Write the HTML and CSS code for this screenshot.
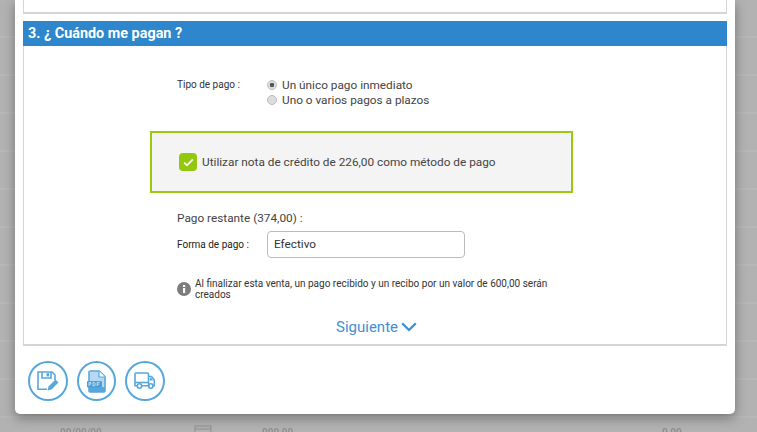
FILE: index.html
```html
<!DOCTYPE html>
<html lang="es">
<head>
<meta charset="utf-8">
<title>Cuándo me pagan</title>
<link rel="stylesheet" href="styles.css">
</head>
<body>
<div class="backdrop">
  <span class="ghost ghost-a">00/00/00</span>
  <svg class="ghost-icon" width="18" height="10" viewBox="0 0 18 10"><path d="M1 10V1h16v9M1 4h16" fill="none" stroke="#8f8f8f"/></svg>
  <span class="ghost ghost-b">000,00</span>
  <span class="ghost ghost-c">0,00</span>
</div>
<main class="modal">
  <div class="prev-panel"></div>
  <section class="panel">
    <h2 class="panel-title">3. ¿ Cuándo me pagan ?</h2>
    <div class="pay-type">
      <div class="small-label">Tipo de pago :</div>
      <div class="radios">
        <label class="radio-row"><span class="radio radio-on"></span>Un único pago inmediato</label>
        <label class="radio-row"><span class="radio"></span>Uno o varios pagos a plazos</label>
      </div>
    </div>
    <div class="credit-box">
      <span class="check">
        <svg width="11" height="9" viewBox="0 0 11 9"><path d="M1.2 4.6 4 7.4 9.8 1.4" fill="none" stroke="#fff" stroke-width="1.7"/></svg>
      </span>
      <span>Utilizar nota de crédito de 226,00 como método de pago</span>
    </div>
    <div class="remaining">
      <div class="remaining-title">Pago restante (374,00) :</div>
      <div class="method-row">
        <span class="small-label method-label">Forma de pago :</span>
        <div class="select-box">Efectivo</div>
      </div>
    </div>
    <div class="notice">
      <svg class="info" width="14" height="14" viewBox="0 0 14 14"><circle cx="7" cy="7" r="7" fill="#7d7d7d"/><rect x="6" y="6" width="2.2" height="5" fill="#fff"/><rect x="6" y="3" width="2.2" height="2" fill="#fff"/></svg>
      <p>Al finalizar esta venta, un pago recibido y un recibo por un valor de 600,00 serán creados</p>
    </div>
    <div class="next">Siguiente
      <svg width="16" height="10" viewBox="0 0 16 10"><path d="M1.2 1.4 8 8l6.800-6.600" fill="none" stroke="#3f8fd6" stroke-width="2.200"/></svg>
    </div>
  </section>
  <div class="actions">
    <button class="action" aria-label="Guardar">
      <svg width="22" height="20" viewBox="0 0 22 20" fill="none" stroke="#57a7dd" stroke-width="1.600">
        <path d="M10 18.200H1V1h14l3 3v5"/><path d="M5 1v6h9V1"/><rect x="9.500" y="2.200" width="2.600" height="3.200" fill="#57a7dd" stroke="none"/>
        <path d="M10.500 19.500l1-4 7-7 3 3-7 7z" fill="#57a7dd" stroke="none"/>
      </svg>
    </button>
    <button class="action" aria-label="PDF">
      <svg width="19" height="23" viewBox="0 0 19 23">
        <path d="M2.800 1h9.500l5.700 5.700V21a1 1 0 0 1-1 1H3a1 1 0 0 1-1-1V2a1 1 0 0 1 1-1z" fill="#b5d9f1" stroke="#57a7dd" stroke-width="1.600"/>
        <path d="M12 1v6h6" fill="#fff" stroke="#57a7dd" stroke-width="1.200"/>
        <path d="M2 17h16v4a1 1 0 0 1-1 1H3a1 1 0 0 1-1-1z" fill="#57a7dd"/>
        <rect x="0" y="11" width="15" height="6.500" rx="1" fill="#4d9ed6"/>
        <path d="M2 16v-3.600h1.800v1.800H2M6 12.400h1.300l.8.800v2l-.8.800H6zM10.200 16v-3.600h2.600M10.200 14.200h2" fill="none" stroke="#d7ebf8" stroke-width=".8"/>
      </svg>
    </button>
    <button class="action" aria-label="Envío">
      <svg width="21" height="18" viewBox="0 0 21 18" fill="none" stroke="#57a7dd" stroke-width="1.600">
        <path d="M3 13.800H1V2a1 1 0 0 1 1-1h11.500a1 1 0 0 1 1 1v11.800H8"/><path d="M1 10.500h13.500"/>
        <path d="M14.500 4.500h3l2.800 3.500v5.800h-1.800M14.500 13.800h.8"/><path d="M15.800 6h1.600l1.600 2.500h-3.200z" fill="#57a7dd" stroke="none"/>
        <circle cx="5.500" cy="14" r="2.200"/><circle cx="16.800" cy="14" r="2.200"/>
      </svg>
    </button>
  </div>
</main>
</body>
</html>
```
FILE: styles.css
```css
* { box-sizing: border-box; }
html, body { margin: 0; height: 432px; overflow: hidden; }
body {
  position: relative;
  font-family: Roboto, "Liberation Sans", sans-serif;
  color: #444;
  background: #b4b4b4;
}
.backdrop {
  position: absolute;
  inset: 0;
  background: repeating-linear-gradient(180deg, #b2b2b2 0 36px, #b7b7b7 36px 38px);
}
.ghost { position: absolute; top: 427px; font-size: 10px; color: #8f8f8f; font-weight: 700; filter: blur(.5px); }
.ghost-a { left: 60px; }
.ghost-b { left: 262px; }
.ghost-c { left: 662px; }
.ghost-icon { position: absolute; left: 194px; top: 425px; }
.modal {
  position: relative;
  width: 720px;
  height: 414px;
  margin-left: 15px;
  padding: 0 8px;
  background: #fff;
  border-radius: 0 0 5px 5px;
  box-shadow: 0 4px 12px rgba(0, 0, 0, .35);
  display: flex;
  flex-direction: column;
}
.prev-panel {
  height: 14px;
  border: 1px solid #d5d5d5;
  border-top: 0;
  border-bottom-width: 2px;
}
.panel {
  margin-top: 7px;
  height: 325px;
  border: 1px solid #d5d5d5;
  border-top: 0;
  border-bottom-width: 2px;
}
.panel-title {
  margin: 0 -1px;
  height: 25px;
  padding: 0 5px;
  background: #2e86cc;
  color: #fff;
  font-size: 14.400px;
  font-weight: 700;
  line-height: 25px;
}
.pay-type { display: flex; margin: 31px 0 0 153px; }
.small-label { font-size: 10px; color: #333; line-height: 14px; padding-top: 1px; }
.pay-type .small-label { width: 90px; }
.radios { display: flex; flex-direction: column; }
.radio-row { display: flex; align-items: center; gap: 5px; height: 15.500px; font-size: 11.800px; color: #444; }
.radio {
  width: 10px; height: 10px; border-radius: 50%;
  background: #dcdcdc; border: 1px solid #bdbdbd;
}
.radio-on { background: radial-gradient(circle, #555 0 2px, #dedede 2.500px); }
.credit-box {
  display: flex; align-items: center; gap: 5px;
  width: 423px; height: 62px;
  margin: 23px 0 0 126px;
  padding: 0 0 0 27px;
  background: #f4f4f4;
  border: 2px solid #9bc90d;
  font-size: 11.800px;
}
.check {
  width: 18px; height: 18px; border-radius: 4px;
  background: #93c80e;
  display: flex; align-items: center; justify-content: center;
}
.remaining { margin: 18px 0 0 153px; }
.remaining-title { font-size: 11.800px; line-height: 15px; }
.method-row { display: flex; align-items: center; margin-top: 5px; }
.method-label { width: 90px; color: #222; }
.select-box {
  width: 198px; height: 27px;
  padding: 0 6px;
  border: 1px solid #bbb; border-radius: 4px;
  font-size: 11.800px; line-height: 25px; color: #333;
}
.notice { display: flex; align-items: center; gap: 4px; width: 380px; margin: 20px 0 0 153px; }
.notice p { margin: 0; font-size: 10px; line-height: 11px; color: #333; }
.info { flex: none; }
.next {
  display: flex; align-items: center; justify-content: center; gap: 3px;
  margin-top: 18px;
  padding-left: 3px;
  font-size: 15px; line-height: 18px; color: #3f8fd6;
}
.actions { display: flex; gap: 9px; margin: 15px 0 0 5px; }
.action {
  width: 39.500px; height: 40px; padding: 0;
  border: 2px solid #57a7dd; border-radius: 50%;
  background: #fff;
  display: flex; align-items: center; justify-content: center;
}
```
